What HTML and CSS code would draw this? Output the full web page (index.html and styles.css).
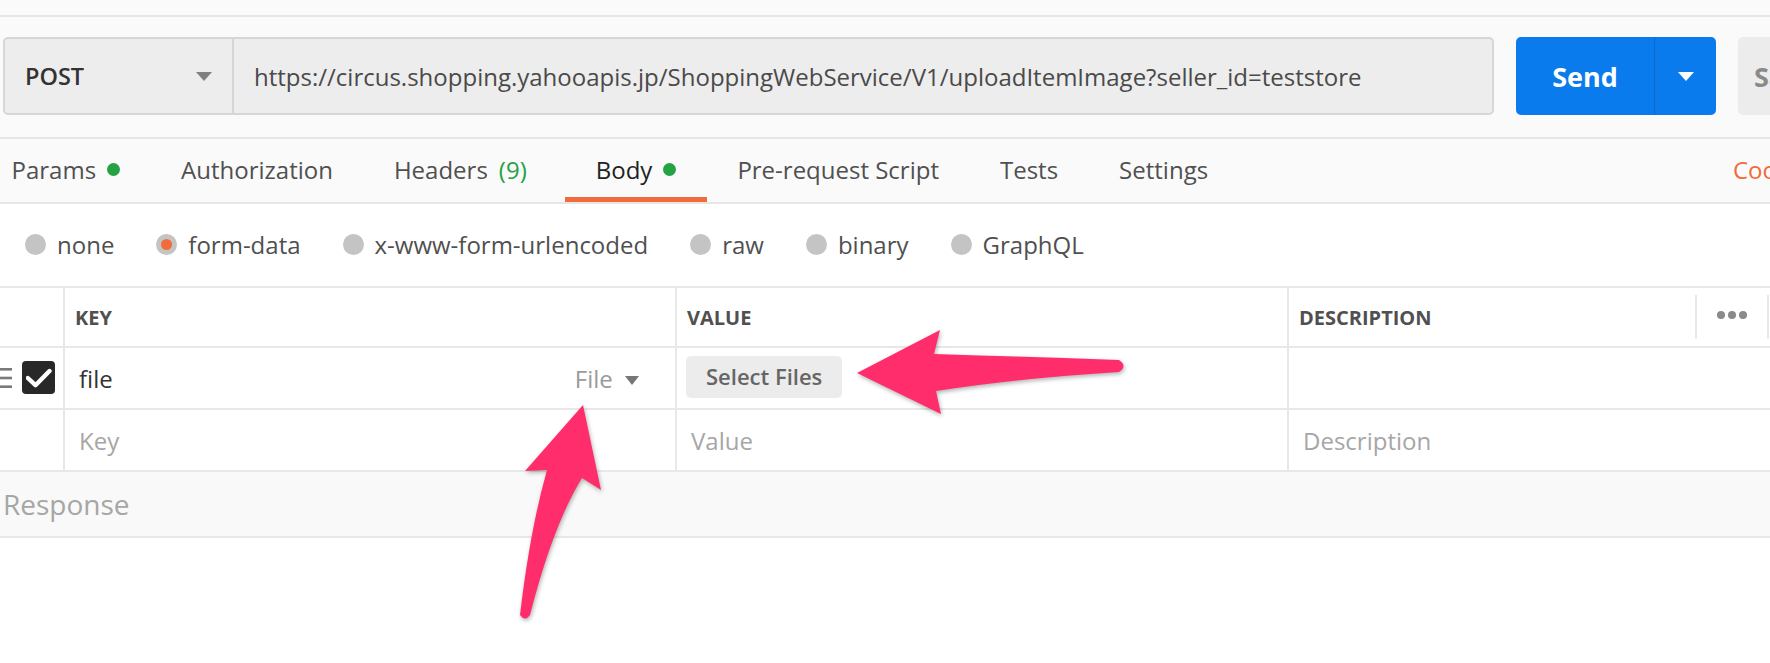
FILE: index.html
```html
<!DOCTYPE html>
<html lang="en">
<head>
    <meta charset="UTF-8">
    <meta name="viewport" content="width=device-width, initial-scale=1.0">
    <title>Upload item image - form-data</title>
    <link rel="stylesheet" href="styles.css">
</head>
<body>
    <div class="app">
        <div class="top-strip"></div>

        <div class="request-bar">
            <div class="url-box">
                <div class="method">POST <span class="caret"></span></div>
                <div class="url">https://circus.shopping.yahooapis.jp/ShoppingWebService/V1/uploadItemImage?seller_id=teststore</div>
            </div>
            <div class="send">
                <span class="send-label">Send</span>
                <span class="send-more"><span class="caret white"></span></span>
            </div>
            <div class="save">Save</div>
        </div>

        <div class="tabs">
            <div class="tab">Params <span class="dot"></span></div>
            <div class="tab">Authorization</div>
            <div class="tab headers">Headers <span class="count">(9)</span></div>
            <div class="tab active">Body <span class="dot"></span></div>
            <div class="tab">Pre-request Script</div>
            <div class="tab">Tests</div>
            <div class="tab">Settings</div>
            <div class="tab cookies">Cookies</div>
        </div>

        <div class="body-types">
            <label class="radio"><span class="ring"></span>none</label>
            <label class="radio checked"><span class="ring"></span>form-data</label>
            <label class="radio"><span class="ring"></span>x-www-form-urlencoded</label>
            <label class="radio"><span class="ring"></span>raw</label>
            <label class="radio"><span class="ring"></span>binary</label>
            <label class="radio"><span class="ring"></span>GraphQL</label>
        </div>

        <div class="kv-table">
            <!-- header -->
            <div class="cell"></div>
            <div class="cell col head">KEY</div>
            <div class="cell col head">VALUE</div>
            <div class="cell col head">DESCRIPTION</div>
            <div class="cell"><span class="sep"></span><span class="dots"><i></i><i></i><i></i></span></div>
            <div class="cell"><span class="sep"></span></div>

            <!-- row: file -->
            <div class="cell handle-cell">
                <svg class="drag" width="12" height="22" viewBox="0 0 12 22"><rect x="0" y="1" width="12" height="2.6" fill="#7a7a7a"/><rect x="0" y="9.7" width="12" height="2.6" fill="#7a7a7a"/><rect x="0" y="18.4" width="12" height="2.6" fill="#7a7a7a"/></svg>
                <span class="check">
                    <svg width="26" height="26" viewBox="0 0 26 26"><path d="M1.8 14 L9.5 21.2 L23.5 7" fill="none" stroke="#fff" stroke-width="4.4" stroke-linecap="round" stroke-linejoin="round"/></svg>
                </span>
            </div>
            <div class="cell col key-cell">
                <span class="key">file</span>
                <span class="type">File <span class="caret small"></span></span>
            </div>
            <div class="cell col"><span class="pick">Select Files</span></div>
            <div class="cell col"></div>
            <div class="cell"></div>
            <div class="cell"></div>

            <!-- empty row -->
            <div class="cell"></div>
            <div class="cell col hint">Key</div>
            <div class="cell col hint">Value</div>
            <div class="cell col hint">Description</div>
            <div class="cell"></div>
            <div class="cell"></div>
        </div>

        <div class="response-bar">Response</div>
    </div>

    <svg class="callouts" width="1770" height="663" viewBox="0 0 1770 663">
        <g class="arrow">
            <path d="M857 373 L940 330 L934 354 Q1030 357 1119 360 Q1128 366 1119 372 Q1020 378 936 391 L941 414 Z"/>
            <path d="M583 405 L601 490 L582 478 Q553 525 530 615 Q525 622 520 615 Q530 530 547 470 L525 471 Z"/>
        </g>
    </svg>
</body>
</html>
```

FILE: styles.css
```css
body {
    margin: 0;
    overflow: hidden;
    background: #fff;
    font-family: "Open Sans", "Liberation Sans", sans-serif;
    color: #505050;
}

.app {
    width: 1880px;
}

.top-strip {
    height: 15px;
    background: #fafafa;
    border-bottom: 2px solid #e6e6e6;
}

/* url bar + send */
.request-bar {
    display: flex;
    align-items: stretch;
    gap: 22px;
    padding: 20px 20px 22px 3px;
    background: #fafafa;
    border-bottom: 2px solid #e6e6e6;
}

.url-box {
    flex: 1;
    display: flex;
    height: 74px;
    background: #ededed;
    border: 2px solid #d6d6d6;
    border-radius: 5px;
}

.method {
    width: 187px;
    display: flex;
    align-items: center;
    justify-content: space-between;
    padding: 0 20px 0 20px;
    border-right: 2px solid #d6d6d6;
    font-size: 23.5px;
    font-weight: 600;
    color: #333;
}

.url {
    display: flex;
    align-items: center;
    padding-left: 20px;
    font-size: 24px;
    color: #4a4a4a;
    white-space: nowrap;
}

.caret {
    display: inline-block;
    width: 0;
    height: 0;
    border-left: 8px solid transparent;
    border-right: 8px solid transparent;
    border-top: 9px solid #808080;
}

.caret.white {
    border-top-color: #fff;
}

.caret.small {
    border-left-width: 7px;
    border-right-width: 7px;
    border-top: 9px solid #777;
    margin-left: 6px;
    vertical-align: 3px;
}

.send {
    width: 200px;
    display: flex;
    background: #097bed;
    border-radius: 5px;
    color: #fff;
}

.send-label {
    width: 138px;
    display: flex;
    align-items: center;
    justify-content: center;
    font-size: 27px;
    font-weight: 700;
    border-right: 1px solid #0a69c9;
}

.send-more {
    flex: 1;
    display: flex;
    align-items: center;
    justify-content: center;
}

.save {
    width: 122px;
    display: flex;
    align-items: center;
    padding-left: 16px;
    box-sizing: border-box;
    background: #ececec;
    border-radius: 5px;
    font-size: 27px;
    font-weight: 700;
    color: #8a8a8a;
}

/* request tabs */
.tabs {
    display: flex;
    height: 63px;
    margin-left: -19px;
    background: #fafafa;
    border-bottom: 2px solid #e6e6e6;
}

.tab {
    position: relative;
    display: flex;
    align-items: center;
    gap: 11px;
    padding: 0 30.5px 3px;
    font-size: 24px;
    color: #505050;
    white-space: nowrap;
}

.tab.headers {
    margin-right: 8px;
}

.tab.active {
    color: #222;
}

.tab.active::after {
    content: "";
    position: absolute;
    left: 0;
    right: 0;
    bottom: 0;
    height: 5px;
    background: #f26b3a;
}

.tab .dot {
    width: 13px;
    height: 13px;
    border-radius: 50%;
    background: #25a244;
}

.tab .count {
    color: #25a244;
}

.tab.cookies {
    margin-left: auto;
    margin-right: 29px;
    color: #f26b3a;
}

/* body type radios */
.body-types {
    display: flex;
    align-items: center;
    gap: 42px;
    height: 82px;
    padding-left: 25px;
}

.radio {
    display: flex;
    align-items: center;
    gap: 11px;
    font-size: 24px;
    color: #505050;
    padding-bottom: 2px;
}

.radio .ring {
    width: 21px;
    height: 21px;
    border-radius: 50%;
    background: #c4c4c4;
    box-sizing: border-box;
}

.radio.checked .ring {
    border: 5px solid #c4c4c4;
    background: #f26b3a;
}

/* key / value table */
.kv-table {
    display: grid;
    grid-template-columns: 63px 612px 612px 408px 72px 1fr;
    grid-template-rows: 60px 62px 62px;
    border-top: 2px solid #e8e8e8;
}

.cell {
    display: flex;
    align-items: center;
    border-bottom: 2px solid #e8e8e8;
    font-size: 24px;
    color: #333;
}

.cell.col {
    border-left: 2px solid #e8e8e8;
    padding-left: 12px;
}

.cell.head {
    font-size: 20px;
    font-weight: 700;
    color: #505050;
    padding-left: 10px;
}

.cell .sep {
    width: 2px;
    height: 44px;
    background: #e8e8e8;
}

.dots {
    display: flex;
    gap: 3px;
    margin-left: 20px;
    margin-top: -4px;
}

.dots i {
    width: 8px;
    height: 8px;
    border-radius: 50%;
    background: #8a8a8a;
}

.handle-cell {
    gap: 10px;
}

.check {
    width: 33px;
    height: 33px;
    display: flex;
    align-items: center;
    justify-content: center;
    background: #282828;
    border-radius: 4px;
    margin-bottom: 2px;
}

.key-cell {
    justify-content: space-between;
    padding-right: 36px;
}

.key-cell .key {
    padding-left: 2px;
}

.type {
    font-size: 24px;
    color: #9a9a9a;
}

.pick {
    margin: 0 0 3px -3px;
    padding: 5px 20px 7px;
    background: #ececec;
    border-radius: 5px;
    font-size: 22px;
    font-weight: 600;
    color: #666;
}

.cell.hint {
    color: #a6a6a6;
    padding-left: 14px;
}

.response-bar {
    height: 64px;
    display: flex;
    align-items: center;
    padding-left: 3px;
    background: #f9f9f9;
    border-bottom: 2px solid #e8e8e8;
    font-size: 28px;
    color: #a6a6a6;
}

/* pink callout arrows drawn over the form */
.callouts {
    position: absolute;
    top: 0;
    left: 0;
    pointer-events: none;
}

.arrow {
    fill: #ff2d6b;
    filter: drop-shadow(1px 2px 2px rgba(0, 0, 0, 0.3));
}
```
